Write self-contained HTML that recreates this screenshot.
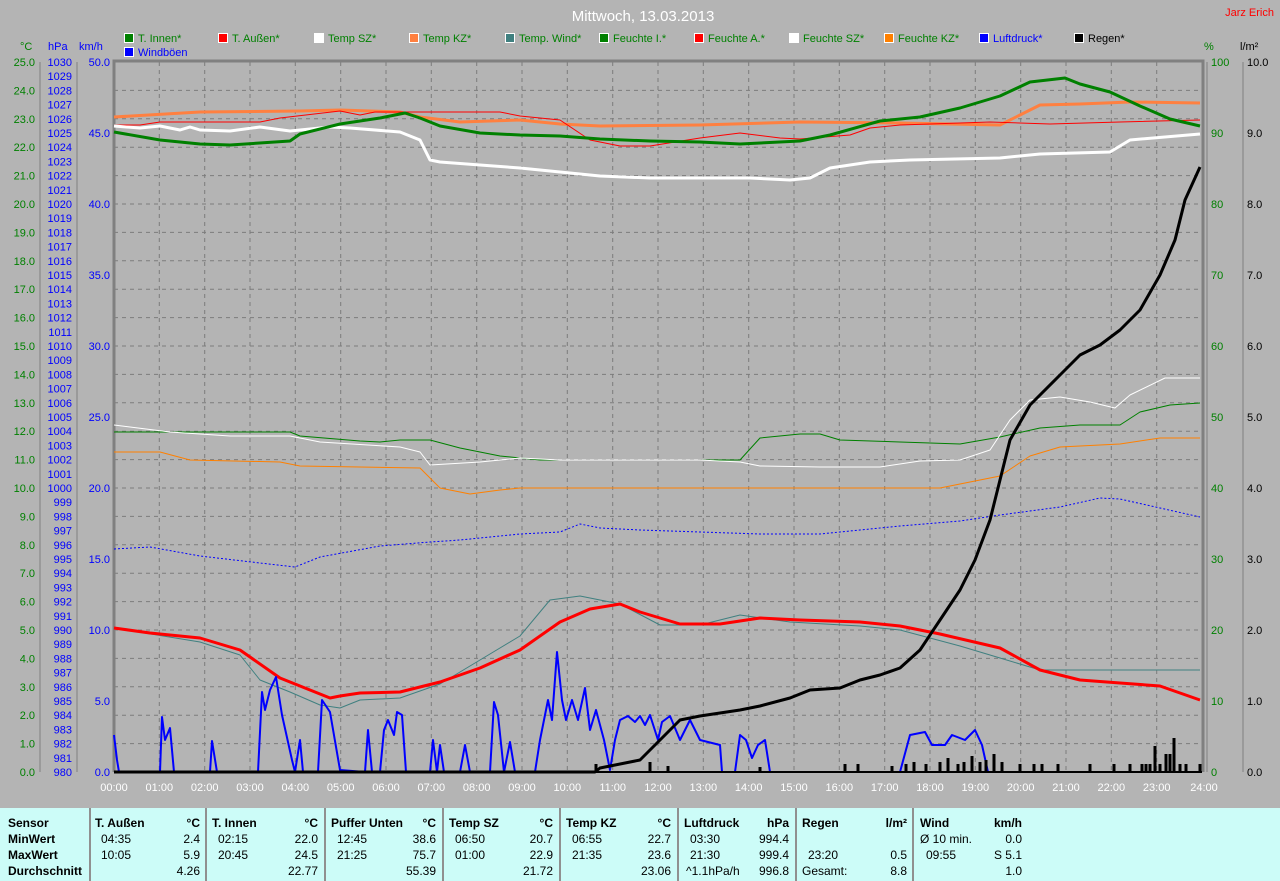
<!DOCTYPE html>
<html><head><meta charset="utf-8">
<style>
html,body{margin:0;padding:0;}
body{width:1280px;height:881px;background:#b4b4b4;overflow:hidden;position:relative;font-family:"Liberation Sans",sans-serif;}
svg{position:absolute;left:0;top:0;}
#tbl{position:absolute;left:0;top:808px;width:1280px;height:73px;background:#ccfcf8;font-size:12px;color:#000;}
#tbl span{position:absolute;white-space:nowrap;}
#tbl .b{font-weight:bold;}
#tbl .r{text-align:right;}
.dv{position:absolute;top:0;width:2px;height:73px;background:#909090;}
</style></head><body>
<svg width="1280" height="808" viewBox="0 0 1280 808" font-family="Liberation Sans, sans-serif">
<!-- grid -->
<g stroke="#7c7c7c" stroke-dasharray="4,4" stroke-width="1">
<path d="M159.3 62V772M204.7 62V772M250 62V772M295.3 62V772M340.7 62V772M386 62V772M431.3 62V772M476.7 62V772M522 62V772M567.3 62V772M612.7 62V772M658 62V772M703.3 62V772M748.7 62V772M794 62V772M839.3 62V772M884.7 62V772M930 62V772M975.3 62V772M1020.7 62V772M1066 62V772M1111.3 62V772M1156.7 62V772"/>
<path d="M114 90.4H1202M114 118.8H1202M114 147.2H1202M114 175.6H1202M114 204H1202M114 232.4H1202M114 260.8H1202M114 289.2H1202M114 317.6H1202M114 346H1202M114 374.4H1202M114 402.8H1202M114 431.2H1202M114 459.6H1202M114 488H1202M114 516.4H1202M114 544.8H1202M114 573.2H1202M114 601.6H1202M114 630H1202M114 658.4H1202M114 686.8H1202M114 715.2H1202M114 743.6H1202"/>
</g>
<!-- frame -->
<path d="M114 772V61H1203V772" fill="none" stroke="#808080" stroke-width="3"/>
<!-- axis lines -->
<g stroke="#808080" stroke-width="1" fill="none">
<path d="M40 62V772M77 62V772M1207 62V772M1243 62V772"/>
</g>
<!-- upper curves -->
<g fill="none" stroke-linejoin="round">
<polyline stroke="#ff8040" stroke-width="3" points="114,117 200,112 300,111 340,110 400,112 420,117 460,122 520,120 560,124 600,126 700,125 800,122 900,123 1000,125 1020,115 1040,105 1080,104 1130,102 1200,103"/>
<polyline stroke="#ff0000" stroke-width="1" points="114,125 140,125 160,122 260,122 280,118 340,111 360,115 375,112 400,112 500,112 520,116 560,120 590,140 620,146 650,146 700,138 740,133 780,138 800,139 850,135 870,128 900,125 990,122 1050,124 1120,122 1200,120"/>
<polyline stroke="#ffffff" stroke-width="3" points="114,126 140,128 160,126 180,130 190,127 200,130 230,131 260,127 290,131 330,127 350,128 400,132 420,140 430,160 440,162 480,165 520,168 560,172 600,176 650,178 700,178 750,178 790,180 810,178 830,168 870,162 910,160 1000,158 1040,154 1110,152 1130,140 1200,134"/>
<polyline stroke="#008000" stroke-width="3" points="114,132 160,140 200,144 230,145 290,141 300,134 340,124 380,118 405,113 420,118 440,126 480,133 520,135 560,136 600,139 650,141 700,142 740,144 800,141 830,135 880,121 920,117 960,108 1000,96 1030,82 1065,78 1080,84 1110,92 1140,106 1170,119 1200,126"/>
<!-- lower curves -->
<polyline stroke="#008000" stroke-width="1" points="114,432 290,432 300,436 360,441 380,442 400,440 430,440 460,448 500,456 540,460 700,460 740,460 760,438 800,434 820,434 840,440 900,442 960,444 1000,437 1040,428 1080,425 1120,425 1140,412 1170,405 1200,403"/>
<polyline stroke="#ffffff" stroke-width="1" points="114,425 170,432 230,436 290,436 320,442 400,447 420,452 430,465 480,462 520,458 560,460 700,460 740,462 760,466 820,467 880,467 920,461 960,460 990,450 1010,420 1030,400 1060,397 1090,402 1115,408 1130,395 1165,378 1200,378"/>
<polyline stroke="#ff8000" stroke-width="1" points="114,452 160,452 190,460 280,462 300,466 420,468 440,488 470,494 500,490 520,488 940,488 970,482 1000,476 1030,456 1060,447 1120,444 1160,438 1200,438"/>
<polyline stroke="#0000ff" stroke-width="1" stroke-dasharray="2,2" points="114,549 150,547 200,556 260,563 295,567 320,557 380,546 430,542 460,540 520,534 560,532 580,524 600,528 640,530 700,532 760,534 820,534 860,530 900,526 960,521 1000,515 1060,507 1100,498 1120,499 1160,508 1200,517"/>
<polyline stroke="#408080" stroke-width="1" points="114,628 200,642 240,655 260,680 290,692 320,705 340,708 360,700 400,698 440,684 480,660 520,636 550,600 580,596 620,604 660,625 700,625 740,615 790,622 860,626 900,630 960,646 1000,658 1040,670 1200,670"/>
<polyline stroke="#ff0000" stroke-width="3" points="114,628 150,633 200,638 240,650 280,678 310,690 330,698 340,696 360,693 400,692 440,682 480,668 520,650 560,622 590,609 620,604 640,612 680,624 720,624 760,618 800,620 860,622 900,626 940,634 1000,648 1040,670 1080,680 1120,683 1160,686 1200,700"/>
<polyline stroke="#0000ff" stroke-width="2" points="114,735 117,760 119,772 160,772 162,717 165,740 170,728 174,772 210,772 212,741 217,772 258,772 262,692 265,710 270,690 276,677 282,715 292,760 295,772 300,740 303,772 318,772 322,700 330,712 340,770 365,772 368,730 372,772 380,772 384,730 388,720 394,735 397,712 402,715 406,772 430,772 433,740 437,772 440,745 444,772 460,772 465,745 470,772 490,772 494,702 498,715 504,772 510,742 515,772 535,772 540,740 548,700 552,720 557,652 562,700 566,720 572,700 578,720 585,688 590,730 596,710 604,740 610,770 615,740 620,720 628,716 635,722 640,716 645,725 650,715 658,740 662,722 670,716 680,740 690,720 700,740 720,745 722,772 735,772 740,735 746,740 752,758 758,745 765,740 770,772 900,772 910,735 925,732 932,745 945,745 952,735 965,740 975,730 982,745 988,772 1202,772"/>
<polyline stroke="#000000" stroke-width="3" points="114,772 595,772 600,768 640,760 660,740 680,720 700,716 720,713 740,710 760,706 790,698 810,690 840,688 860,680 880,675 900,668 920,650 940,620 960,590 975,560 990,520 1010,440 1030,405 1060,375 1080,355 1100,345 1120,330 1140,310 1160,275 1175,240 1185,200 1200,167"/>
</g>
<path d="M114 772H1202" stroke="#000" stroke-width="2"/>
<g stroke="#000" stroke-width="3">
<path d="M596 772v-8M650 772v-10M668 772v-6M760 772v-5M845 772v-8M858 772v-8M892 772v-6M906 772v-8M914 772v-10M926 772v-8M940 772v-10M948 772v-14M958 772v-8M964 772v-10M972 772v-16M980 772v-10M986 772v-12M994 772v-18M1002 772v-10M1020 772v-8M1034 772v-8M1042 772v-8M1058 772v-8M1090 772v-8M1114 772v-8M1130 772v-8M1142 772v-8M1146 772v-8M1150 772v-8M1155 772v-26M1160 772v-8M1166 772v-18M1170 772v-18M1174 772v-34M1180 772v-8M1186 772v-8M1200 772v-8"/>
</g>
<!-- title -->
<text x="643" y="21" fill="#fff" font-size="15" text-anchor="middle">Mittwoch, 13.03.2013</text>
<text x="1274" y="16" fill="#ff0000" font-size="11" text-anchor="end">Jarz Erich</text>
<!-- legend -->
<g font-size="11" stroke="#fff" stroke-width="1">
<rect x="124.5" y="33.5" width="9" height="9" fill="#008000"/>
<rect x="218.5" y="33.5" width="9" height="9" fill="#ff0000"/>
<rect x="314.5" y="33.5" width="9" height="9" fill="#ffffff"/>
<rect x="409.5" y="33.5" width="9" height="9" fill="#ff8040"/>
<rect x="505.5" y="33.5" width="9" height="9" fill="#408080"/>
<rect x="599.5" y="33.5" width="9" height="9" fill="#008000"/>
<rect x="694.5" y="33.5" width="9" height="9" fill="#ff0000"/>
<rect x="789.5" y="33.5" width="9" height="9" fill="#ffffff"/>
<rect x="884.5" y="33.5" width="9" height="9" fill="#ff8000"/>
<rect x="979.5" y="33.5" width="9" height="9" fill="#0000ff"/>
<rect x="1074.5" y="33.5" width="9" height="9" fill="#000000"/>
<rect x="124.5" y="47.5" width="9" height="9" fill="#0000ff"/>
</g>
<g font-size="11" fill="#008000">
<text x="138" y="42">T. Innen*</text>
<text x="232" y="42">T. Außen*</text>
<text x="328" y="42">Temp SZ*</text>
<text x="423" y="42">Temp KZ*</text>
<text x="519" y="42">Temp. Wind*</text>
<text x="613" y="42">Feuchte I.*</text>
<text x="708" y="42">Feuchte A.*</text>
<text x="803" y="42">Feuchte SZ*</text>
<text x="898" y="42">Feuchte KZ*</text>
<text x="993" y="42" fill="#0000ff">Luftdruck*</text>
<text x="1088" y="42" fill="#000">Regen*</text>
<text x="138" y="56" fill="#0000ff">Windböen</text>
</g>
<!-- axis titles -->
<text x="20" y="50" font-size="11" fill="#008000">°C</text>
<text x="48" y="50" font-size="11" fill="#0000ff">hPa</text>
<text x="79" y="50" font-size="11" fill="#0000ff">km/h</text>
<text x="1204" y="50" font-size="11" fill="#008000">%</text>
<text x="1240" y="50" font-size="11" fill="#000">l/m²</text>
<!-- °C labels -->
<g font-size="11" fill="#008000" text-anchor="end">
<text x="35" y="66">25.0</text><text x="35" y="94.4">24.0</text><text x="35" y="122.8">23.0</text><text x="35" y="151.2">22.0</text><text x="35" y="179.6">21.0</text><text x="35" y="208">20.0</text><text x="35" y="236.4">19.0</text><text x="35" y="264.8">18.0</text><text x="35" y="293.2">17.0</text><text x="35" y="321.6">16.0</text><text x="35" y="350">15.0</text><text x="35" y="378.4">14.0</text><text x="35" y="406.8">13.0</text><text x="35" y="435.2">12.0</text><text x="35" y="463.6">11.0</text><text x="35" y="492">10.0</text><text x="35" y="520.4">9.0</text><text x="35" y="548.8">8.0</text><text x="35" y="577.2">7.0</text><text x="35" y="605.6">6.0</text><text x="35" y="634">5.0</text><text x="35" y="662.4">4.0</text><text x="35" y="690.8">3.0</text><text x="35" y="719.2">2.0</text><text x="35" y="747.6">1.0</text><text x="35" y="776">0.0</text>
</g>
<!-- hPa labels -->
<g font-size="11" fill="#0000ff" text-anchor="end">
<text x="72" y="66">1030</text><text x="72" y="80.2">1029</text><text x="72" y="94.4">1028</text><text x="72" y="108.6">1027</text><text x="72" y="122.8">1026</text><text x="72" y="137">1025</text><text x="72" y="151.2">1024</text><text x="72" y="165.4">1023</text><text x="72" y="179.6">1022</text><text x="72" y="193.8">1021</text><text x="72" y="208">1020</text><text x="72" y="222.2">1019</text><text x="72" y="236.4">1018</text><text x="72" y="250.6">1017</text><text x="72" y="264.8">1016</text><text x="72" y="279">1015</text><text x="72" y="293.2">1014</text><text x="72" y="307.4">1013</text><text x="72" y="321.6">1012</text><text x="72" y="335.8">1011</text><text x="72" y="350">1010</text><text x="72" y="364.2">1009</text><text x="72" y="378.4">1008</text><text x="72" y="392.6">1007</text><text x="72" y="406.8">1006</text><text x="72" y="421">1005</text><text x="72" y="435.2">1004</text><text x="72" y="449.4">1003</text><text x="72" y="463.6">1002</text><text x="72" y="477.8">1001</text><text x="72" y="492">1000</text><text x="72" y="506.2">999</text><text x="72" y="520.4">998</text><text x="72" y="534.6">997</text><text x="72" y="548.8">996</text><text x="72" y="563">995</text><text x="72" y="577.2">994</text><text x="72" y="591.4">993</text><text x="72" y="605.6">992</text><text x="72" y="619.8">991</text><text x="72" y="634">990</text><text x="72" y="648.2">989</text><text x="72" y="662.4">988</text><text x="72" y="676.6">987</text><text x="72" y="690.8">986</text><text x="72" y="705">985</text><text x="72" y="719.2">984</text><text x="72" y="733.4">983</text><text x="72" y="747.6">982</text><text x="72" y="761.8">981</text><text x="72" y="776">980</text>
</g>
<!-- km/h labels -->
<g font-size="11" fill="#0000ff" text-anchor="end">
<text x="110" y="66">50.0</text><text x="110" y="137">45.0</text><text x="110" y="208">40.0</text><text x="110" y="279">35.0</text><text x="110" y="350">30.0</text><text x="110" y="421">25.0</text><text x="110" y="492">20.0</text><text x="110" y="563">15.0</text><text x="110" y="634">10.0</text><text x="110" y="705">5.0</text><text x="110" y="776">0.0</text>
</g>
<!-- % labels -->
<g font-size="11" fill="#008000">
<text x="1211" y="66">100</text><text x="1211" y="137">90</text><text x="1211" y="208">80</text><text x="1211" y="279">70</text><text x="1211" y="350">60</text><text x="1211" y="421">50</text><text x="1211" y="492">40</text><text x="1211" y="563">30</text><text x="1211" y="634">20</text><text x="1211" y="705">10</text><text x="1211" y="776">0</text>
</g>
<!-- l/m2 labels -->
<g font-size="11" fill="#000">
<text x="1247" y="66">10.0</text><text x="1247" y="137">9.0</text><text x="1247" y="208">8.0</text><text x="1247" y="279">7.0</text><text x="1247" y="350">6.0</text><text x="1247" y="421">5.0</text><text x="1247" y="492">4.0</text><text x="1247" y="563">3.0</text><text x="1247" y="634">2.0</text><text x="1247" y="705">1.0</text><text x="1247" y="776">0.0</text>
</g>
<!-- x labels -->
<g font-size="11" fill="#fff" text-anchor="middle">
<text x="114" y="791">00:00</text><text x="159.3" y="791">01:00</text><text x="204.7" y="791">02:00</text><text x="250" y="791">03:00</text><text x="295.3" y="791">04:00</text><text x="340.7" y="791">05:00</text><text x="386" y="791">06:00</text><text x="431.3" y="791">07:00</text><text x="476.7" y="791">08:00</text><text x="522" y="791">09:00</text><text x="567.3" y="791">10:00</text><text x="612.7" y="791">11:00</text><text x="658" y="791">12:00</text><text x="703.3" y="791">13:00</text><text x="748.7" y="791">14:00</text><text x="794" y="791">15:00</text><text x="839.3" y="791">16:00</text><text x="884.7" y="791">17:00</text><text x="930" y="791">18:00</text><text x="975.3" y="791">19:00</text><text x="1020.7" y="791">20:00</text><text x="1066" y="791">21:00</text><text x="1111.3" y="791">22:00</text><text x="1156.7" y="791">23:00</text><text x="1204" y="791">24:00</text>
</g>
</svg>
<div id="tbl">
<div class="dv" style="left:89px"></div><div class="dv" style="left:205px"></div><div class="dv" style="left:324px"></div><div class="dv" style="left:442px"></div><div class="dv" style="left:559px"></div><div class="dv" style="left:677px"></div><div class="dv" style="left:795px"></div><div class="dv" style="left:912px"></div>
<span class="b" style="left:8px;top:8px">Sensor</span>
<span class="b" style="left:8px;top:24px">MinWert</span>
<span class="b" style="left:8px;top:40px">MaxWert</span>
<span class="b" style="left:8px;top:56px">Durchschnitt</span>

<span class="b" style="left:95px;top:8px">T. Außen</span><span class="b" style="right:1080px;top:8px">°C</span>
<span style="left:101px;top:24px">04:35</span><span style="right:1080px;top:24px">2.4</span>
<span style="left:101px;top:40px">10:05</span><span style="right:1080px;top:40px">5.9</span>
<span style="right:1080px;top:56px">4.26</span>

<span class="b" style="left:212px;top:8px">T. Innen</span><span class="b" style="right:962px;top:8px">°C</span>
<span style="left:218px;top:24px">02:15</span><span style="right:962px;top:24px">22.0</span>
<span style="left:218px;top:40px">20:45</span><span style="right:962px;top:40px">24.5</span>
<span style="right:962px;top:56px">22.77</span>

<span class="b" style="left:331px;top:8px">Puffer Unten</span><span class="b" style="right:844px;top:8px">°C</span>
<span style="left:337px;top:24px">12:45</span><span style="right:844px;top:24px">38.6</span>
<span style="left:337px;top:40px">21:25</span><span style="right:844px;top:40px">75.7</span>
<span style="right:844px;top:56px">55.39</span>

<span class="b" style="left:449px;top:8px">Temp SZ</span><span class="b" style="right:727px;top:8px">°C</span>
<span style="left:455px;top:24px">06:50</span><span style="right:727px;top:24px">20.7</span>
<span style="left:455px;top:40px">01:00</span><span style="right:727px;top:40px">22.9</span>
<span style="right:727px;top:56px">21.72</span>

<span class="b" style="left:566px;top:8px">Temp KZ</span><span class="b" style="right:609px;top:8px">°C</span>
<span style="left:572px;top:24px">06:55</span><span style="right:609px;top:24px">22.7</span>
<span style="left:572px;top:40px">21:35</span><span style="right:609px;top:40px">23.6</span>
<span style="right:609px;top:56px">23.06</span>

<span class="b" style="left:684px;top:8px">Luftdruck</span><span class="b" style="right:491px;top:8px">hPa</span>
<span style="left:690px;top:24px">03:30</span><span style="right:491px;top:24px">994.4</span>
<span style="left:690px;top:40px">21:30</span><span style="right:491px;top:40px">999.4</span>
<span style="left:686px;top:56px">^1.1hPa/h</span><span style="right:491px;top:56px">996.8</span>

<span class="b" style="left:802px;top:8px">Regen</span><span class="b" style="right:373px;top:8px">l/m²</span>
<span style="left:808px;top:40px">23:20</span><span style="right:373px;top:40px">0.5</span>
<span style="left:802px;top:56px">Gesamt:</span><span style="right:373px;top:56px">8.8</span>

<span class="b" style="left:920px;top:8px">Wind</span><span class="b" style="right:258px;top:8px">km/h</span>
<span style="left:920px;top:24px">Ø 10 min.</span><span style="right:258px;top:24px">0.0</span>
<span style="left:926px;top:40px">09:55</span><span style="right:258px;top:40px">S 5.1</span>
<span style="right:258px;top:56px">1.0</span>
</div>
</body></html>
